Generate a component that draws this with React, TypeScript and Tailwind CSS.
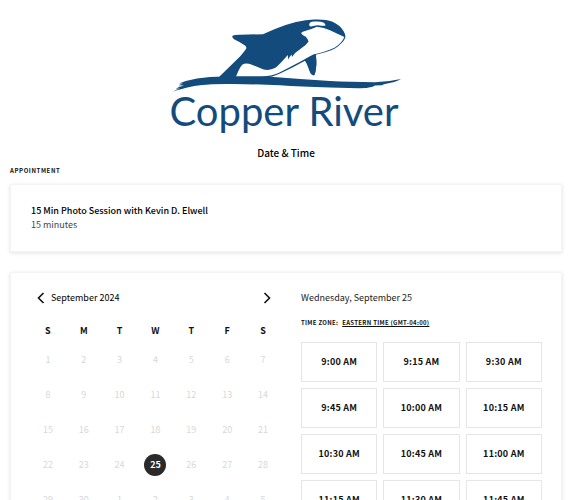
import { useState } from "react";

const weekdays = ["S", "M", "T", "W", "T", "F", "S"];

// September 2024 begins on a Sunday; the last row runs into October.
const days = Array.from({ length: 35 }, (_, i) => (i < 30 ? i + 1 : i - 29));

const times = [
  "9:00 AM", "9:15 AM", "9:30 AM",
  "9:45 AM", "10:00 AM", "10:15 AM",
  "10:30 AM", "10:45 AM", "11:00 AM",
  "11:15 AM", "11:30 AM", "11:45 AM",
];

function Logo() {
  return (
    <div className="flex flex-col items-center text-[#124b7c]">
      <svg viewBox="169 18 234 76" className="h-[76px] w-[234px]" aria-hidden="true">
        <path
          fill="currentColor"
          d="M219 77 L240 56.5 Q244 52 246 49 Q247 47 245 45.5 Q240 42 234.5 39.5 Q231 37 233 35.6 Q235 34.6 240 34.7 L263 34.2 Q268 32 275 29 Q284 25 296 22 Q306 19.6 314 19.5 Q326 19 332 21.5 Q340 25 343.5 31 Q346 35 345.2 38 Q343 43 335 48.5 Q328 52 315.8 54.8 Q316.8 63 316 67 Q315.4 73 314.3 75.2 Q311.5 75.8 309.8 71.5 L307 64.5 Q306 62 305 60.7 Q292 68 280 73.5 Q273 77 263 78 Z"
        />
        <path
          fill="white"
          d="M236 76.5 Q240 66.5 242.5 64.4 Q246 62.5 252 64.8 L263 69.2 Q269 71.2 275.5 67.8 Q280 64 287.8 55 L288.2 59.5 Q290 56 291.6 54.5 L292 57 Q295 52.3 301 48.5 Q306 45.6 308.6 41.5 Q307.5 38.5 305.8 36.8 Q302.5 35.3 301.3 33.5 Q301 32 303.5 31.4 Q311 29.6 317 26.8 Q324 27.5 330 30.2 Q338 34 344.4 37 Q342 43 334.5 47.7 Q327 51.5 313.5 54.5 Q307 57.8 302 60.7 Q290 67 279.5 72.6 Q273 76 262 76.5 Z"
        />
        <path
          fill="currentColor"
          d="M314 54.4 L315.8 54.4 Q316.9 64 315.9 69 Q315.2 74 314.1 75.2 Q311.4 75.2 309.8 71.3 Q307.8 63.5 304.9 60.3 Q308 57 314 54.4 Z"
        />
        <path
          fill="white"
          d="M309.2 24.5 Q309.5 21.8 314 21.6 Q320 21.1 323.4 22.5 Q325.9 24 325.4 25.5 Q324 26.2 318 25.2 Q314 25.5 311 26.6 Q309 26.8 309.2 24.5 Z"
        />
        <path
          fill="currentColor"
          d="M173.2 91.8 Q176 89.4 180 88.4 L175.8 88.8 Q179 86.6 184 85.6 L178.4 85.2 L183 83.4 L179 83.5 Q188 80.2 197 78.6 Q210 76.5 225 76.6 L267 76.6 Q300 79.2 330 81.1 Q350 82.2 375 82.3 Q389 81.7 401 79 Q396 82.2 384 84.2 L382 85.2 L375 85.6 L372.5 86.7 Q366 88.4 358 88.2 L330 87.4 Q300 86.8 280 85.3 Q250 83.9 227 84.1 Q211 84.2 200 85.3 Q188 86.8 182 89 Q176 90.2 173.2 91.8 Z"
        />
      </svg>
      <div className="-mt-1 pr-1 font-[family-name:Lato,sans-serif] text-[40px] leading-[42px]">Copper River</div>
    </div>
  );
}

function Chevron({ points }: { points: string }) {
  return (
    <svg viewBox="0 0 12 12" className="size-3" fill="none" stroke="currentColor" strokeWidth="1.6" aria-hidden="true">
      <polyline points={points} />
    </svg>
  );
}

export default function App() {
  const [selected, setSelected] = useState(24);

  return (
    <main className="min-h-screen bg-white pt-[18px] pr-[7px] pb-5 pl-[10px] font-['Noto_Sans_CJK_SC',sans-serif] text-[10px] leading-[14px] text-[#111]">
      <Logo />
      <h1 className="mt-[14px] text-center font-medium text-black">Date &amp; Time</h1>

      <h2 className="mt-[6px] text-[6px] leading-[10px] font-bold tracking-widest">APPOINTMENT</h2>
      <section className="mt-2 border border-[#f4f4f4] px-5 py-[19px] shadow-[0_1px_4px_rgba(0,0,0,0.12)]">
        <h3 className="text-[9px] leading-[14px] font-medium text-black">15 Min Photo Session with Kevin D. Elwell</h3>
        <p className="text-[9px] leading-[14px] text-[#444]">15 minutes</p>
      </section>

      <section className="mt-5 grid grid-cols-[251fr_241fr] gap-5 border border-[#f4f4f4] p-[19px] shadow-[0_1px_4px_rgba(0,0,0,0.12)]">
        <div>
          <div className="flex h-3 items-center pr-2 pl-[5px] text-[9px]">
            <button type="button" aria-label="Previous month">
              <Chevron points="8.5,1 3.5,6 8.5,11" />
            </button>
            <span className="ml-1 flex-1 text-black">September 2024</span>
            <button type="button" aria-label="Next month">
              <Chevron points="3.5,1 8.5,6 3.5,11" />
            </button>
          </div>
          <table className="mt-4 w-full table-fixed text-center text-[9px]">
            <thead>
              <tr className="h-[22px]">
                {weekdays.map((d, i) => (
                  <th key={i} scope="col" className="p-0 font-bold">{d}</th>
                ))}
              </tr>
            </thead>
            <tbody>
              {[0, 1, 2, 3, 4].map((week) => (
                <tr key={week} className="h-[35px]">
                  {days.slice(week * 7, week * 7 + 7).map((day, i) => {
                    const index = week * 7 + i;
                    return (
                      <td key={i} className="p-0">
                        <button
                          type="button"
                          onClick={() => setSelected(index)}
                          className={
                            index === selected
                              ? "size-[22px] rounded-full bg-[#2a2a2a] align-middle font-bold text-white"
                              : "size-[22px] rounded-full align-middle text-[#d8d8d8]"
                          }
                        >
                          {day}
                        </button>
                      </td>
                    );
                  })}
                </tr>
              ))}
            </tbody>
          </table>
        </div>

        <div>
          <p className="h-3 text-[9px] leading-3 text-[#222]">Wednesday, September 25</p>
          <div className="mt-[14px] flex h-[10px] items-center gap-1 text-[6px] leading-[10px] font-bold tracking-wider">
            <span>TIME ZONE:</span>
            <a href="#timezone" className="underline">EASTERN TIME (GMT-04:00)</a>
          </div>
          <div className="mt-[14px] grid grid-cols-3 gap-[6px]">
            {times.map((t) => (
              <button
                key={t}
                type="button"
                className="h-10 border border-[#e6e6e6] text-[9px] font-bold tracking-wide"
              >
                {t}
              </button>
            ))}
          </div>
        </div>
      </section>
    </main>
  );
}
